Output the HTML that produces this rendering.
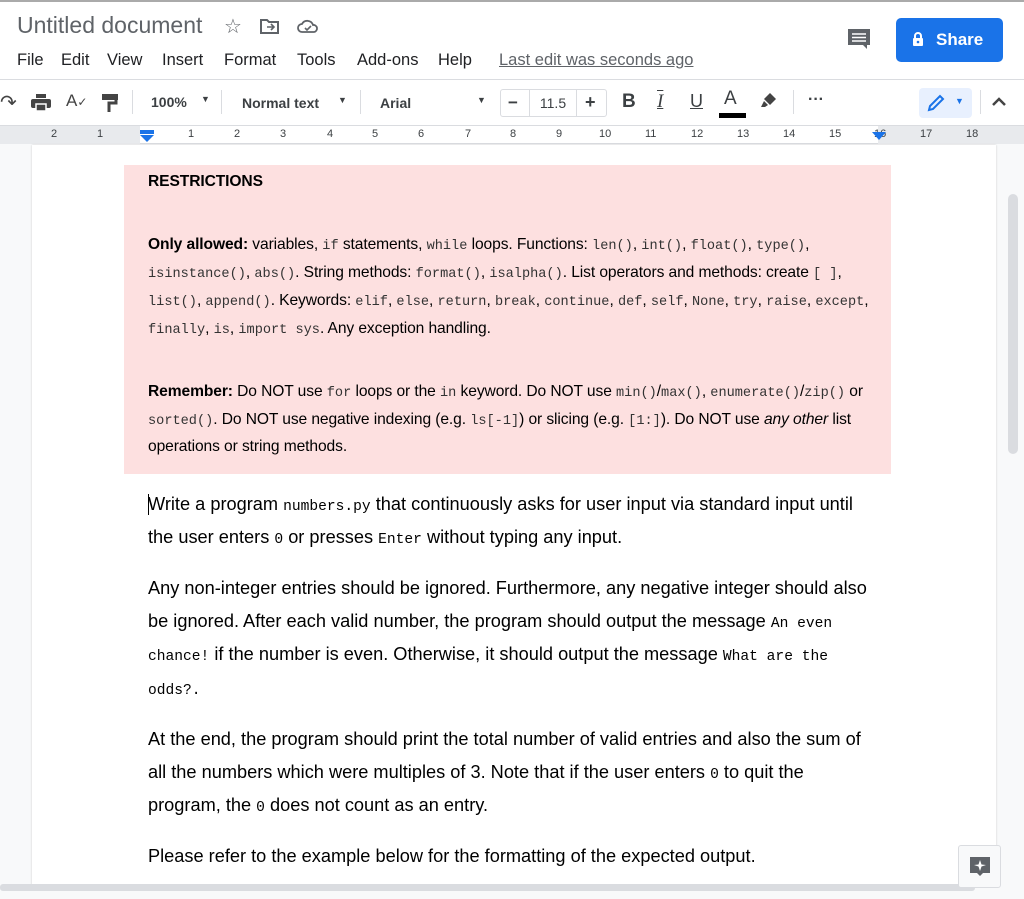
<!DOCTYPE html>
<html><head><meta charset="utf-8">
<style>
*{margin:0;padding:0;box-sizing:border-box}
body{width:1024px;height:899px;overflow:hidden;background:#f8f9fa;font-family:"Liberation Sans",Arial,sans-serif;position:relative;color:#000}
.abs{position:absolute}
.top{left:0;top:0;width:1024px;height:80px;background:#fff;border-top:2px solid #aaa;border-bottom:1px solid #dadce0}
.title{left:17px;top:12px;font-size:23px;color:#5f6368}
.menu{top:50px;font-size:16.5px;color:#202124}
.tb{left:0;top:80px;width:1024px;height:46px;background:#fff;border-bottom:1px solid #dadce0;font-size:14px;color:#3c4043}
.ruler{left:0;top:126px;width:1024px;height:18px;background:#fff;border-bottom:1px solid #dadce0;font-size:11px;color:#3c4043}
.page{left:32px;top:145px;width:964px;height:740px;background:#fff;box-shadow:0 0 2px #ccc}
.pink{left:124px;top:165px;width:767px;height:309px;background:#fde0e0}
.pt{left:148px;font-size:15.6px;white-space:nowrap;line-height:28px;letter-spacing:-0.1px}
.m{font-family:"Liberation Mono",monospace;font-size:13.6px;color:#333;letter-spacing:0}
.bt{left:148px;font-size:18.2px;white-space:nowrap;line-height:33px}
.bm{font-family:"Liberation Mono",monospace;font-size:14.6px}
.sep{top:10px;width:1px;height:24px;background:#dadce0}
</style></head><body>
<div class="abs top"></div>
<div class="abs title">Untitled document</div>
<div class="abs" style="left:224px;top:14px;font-size:20px;color:#5f6368">☆</div>
<svg class="abs" style="left:260px;top:18px" width="20" height="16" viewBox="0 0 20 16"><path d="M1 2h6l2 2h9v11H1z" fill="none" stroke="#5f6368" stroke-width="2"/><path d="M7 9h6M11 6l3 3-3 3" fill="none" stroke="#5f6368" stroke-width="1.6"/></svg>
<svg class="abs" style="left:297px;top:19px" width="22" height="15" viewBox="0 0 22 15"><path d="M5 13a4 4 0 010-8 6 6 0 0111 1 3.5 3.5 0 011 7z" fill="none" stroke="#5f6368" stroke-width="1.8"/><path d="M8 9l2 2 4-4" fill="none" stroke="#5f6368" stroke-width="1.6"/></svg>
<div class="abs menu" style="left:17px;top:51px">File</div>
<div class="abs menu" style="left:61px;top:51px">Edit</div>
<div class="abs menu" style="left:107px;top:51px">View</div>
<div class="abs menu" style="left:162px;top:51px">Insert</div>
<div class="abs menu" style="left:224px;top:51px">Format</div>
<div class="abs menu" style="left:297px;top:51px">Tools</div>
<div class="abs menu" style="left:357px;top:51px">Add-ons</div>
<div class="abs menu" style="left:438px;top:51px">Help</div>
<div class="abs menu" style="left:499px;top:51px;color:#5f6368;text-decoration:underline">Last edit was seconds ago</div>
<svg class="abs" style="left:846px;top:27px" width="26" height="24" viewBox="0 0 26 24"><path d="M2 2h22v16h-3v4l-4-4H2z" fill="#5f6368"/><path d="M6 7h14M6 10.5h14M6 14h14" stroke="#fff" stroke-width="1.6"/></svg>
<div class="abs" style="left:896px;top:18px;width:107px;height:44px;background:#1a73e8;border-radius:5px;color:#fff;font-weight:bold;font-size:17px;line-height:44px;padding-left:40px">Share</div>
<svg class="abs" style="left:912px;top:32px" width="12" height="15" viewBox="0 0 12 15"><path d="M3 6V4a3 3 0 016 0v2" fill="none" stroke="#fff" stroke-width="2"/><rect x="1" y="6" width="10" height="8" rx="1" fill="#fff"/><circle cx="6" cy="10" r="1.3" fill="#1a73e8"/></svg>
<div class="abs tb">
<div class="abs" style="left:0;top:10px;font-size:20px;color:#444">↷</div>
<svg class="abs" style="left:31px;top:14px" width="20" height="18" viewBox="0 0 20 18"><rect x="5" y="0" width="10" height="4" fill="#444"/><rect x="0" y="5" width="20" height="9" rx="2" fill="#444"/><rect x="5" y="10" width="10" height="7" fill="#444" stroke="#fff" stroke-width="1.5"/></svg>
<div class="abs" style="left:66px;top:11px;font-size:17px;color:#444">A<span style="font-size:12px">✓</span></div>
<svg class="abs" style="left:101px;top:13px" width="18" height="20" viewBox="0 0 18 20"><rect x="1" y="1" width="16" height="6" fill="#444"/><path d="M15 7v3H8v9" fill="none" stroke="#444" stroke-width="3"/></svg>
<div class="abs sep" style="left:132px"></div>
<div class="abs" style="left:151px;top:14px;font-weight:bold">100%</div><div class="abs" style="left:201px;top:14px;font-size:9px">▼</div>
<div class="abs sep" style="left:221px"></div>
<div class="abs" style="left:242px;top:15px;font-weight:bold">Normal text</div><div class="abs" style="left:338px;top:15px;font-size:9px">▼</div>
<div class="abs sep" style="left:360px"></div>
<div class="abs" style="left:380px;top:15px;font-weight:bold">Arial</div><div class="abs" style="left:477px;top:15px;font-size:9px">▼</div>
<div class="abs" style="left:500px;top:9px;width:107px;height:28px;border:1px solid #dadce0;border-radius:3px"></div>
<div class="abs" style="left:529px;top:9px;width:48px;height:28px;border-left:1px solid #dadce0;border-right:1px solid #dadce0;text-align:center;line-height:28px">11.5</div>
<div class="abs" style="left:508px;top:13px;font-size:17px;font-weight:bold">−</div>
<div class="abs" style="left:585px;top:12px;font-size:18px;font-weight:bold">+</div>
<div class="abs" style="left:622px;top:11px;font-size:19px;font-weight:bold">B</div>
<div class="abs" style="left:657px;top:11px;font-size:19px;font-style:italic;font-family:'Liberation Serif',serif;text-decoration:overline underline">I</div>
<div class="abs" style="left:690px;top:11px;font-size:18px;text-decoration:underline">U</div>
<div class="abs" style="left:724px;top:8px;font-size:19px">A</div><div class="abs" style="left:719px;top:33px;width:27px;height:5px;background:#000"></div>
<svg class="abs" style="left:760px;top:11px" width="18" height="18" viewBox="0 0 18 18"><path d="M10 2l6 6-6 6-6-6z" fill="#444"/><path d="M4 10l4 4-3 2H1z" fill="#444"/></svg>
<div class="abs sep" style="left:793px"></div>
<div class="abs" style="left:808px;top:11px;font-size:16px;font-weight:bold">···</div>
<div class="abs" style="left:919px;top:8px;width:53px;height:30px;background:#e8f0fe;border-radius:4px"></div>
<svg class="abs" style="left:927px;top:14px" width="18" height="18" viewBox="0 0 18 18"><path d="M2 16l1-4L13 2l3 3L6 15z" fill="none" stroke="#1a73e8" stroke-width="2"/></svg>
<div class="abs" style="left:955px;top:16px;font-size:9px;color:#1a73e8">▼</div>
<div class="abs sep" style="left:980px"></div>
<svg class="abs" style="left:991px;top:16px" width="16" height="12" viewBox="0 0 16 12"><path d="M2 9l6-6 6 6" fill="none" stroke="#444" stroke-width="2.5"/></svg>
</div>
<div class="abs ruler">
<div class="abs" style="left:0;top:0;width:140px;height:18px;background:#e8eaed"></div>
<div class="abs" style="left:878px;top:0;width:146px;height:18px;background:#e8eaed"></div>
<div class="abs" style="top:2px;left:0;width:1024px;white-space:nowrap;letter-spacing:0">
<span class="abs" style="left:51px">2</span><span class="abs" style="left:97px">1</span><span class="abs" style="left:188px">1</span><span class="abs" style="left:234px">2</span><span class="abs" style="left:280px">3</span><span class="abs" style="left:327px">4</span><span class="abs" style="left:372px">5</span><span class="abs" style="left:418px">6</span><span class="abs" style="left:465px">7</span><span class="abs" style="left:510px">8</span><span class="abs" style="left:556px">9</span><span class="abs" style="left:599px">10</span><span class="abs" style="left:645px">11</span><span class="abs" style="left:691px">12</span><span class="abs" style="left:737px">13</span><span class="abs" style="left:783px">14</span><span class="abs" style="left:829px">15</span><span class="abs" style="left:874px">16</span><span class="abs" style="left:920px">17</span><span class="abs" style="left:966px">18</span>
</div>
<svg class="abs" style="left:139px;top:4px" width="16" height="12" viewBox="0 0 16 12"><rect x="1" y="0" width="14" height="4" fill="#1a73e8"/><path d="M1 5h14l-7 7z" fill="#1a73e8"/></svg>
<svg class="abs" style="left:871px;top:6px" width="16" height="10" viewBox="0 0 16 10"><path d="M1 0h14l-7 8z" fill="#1a73e8"/></svg>
</div>
<div class="abs page"></div>
<div class="abs pink"></div>
<div class="abs pt" style="top:168px;font-weight:bold">RESTRICTIONS</div>
<div class="abs pt" style="top:231px"><b>Only allowed:</b> variables, <span class="m">if</span> statements, <span class="m">while</span> loops. Functions: <span class="m">len()</span>, <span class="m">int()</span>, <span class="m">float()</span>, <span class="m">type()</span>,</div>
<div class="abs pt" style="top:259px"><span class="m">isinstance()</span>, <span class="m">abs()</span>. String methods: <span class="m">format()</span>, <span class="m">isalpha()</span>. List operators and methods: create <span class="m">[ ]</span>,</div>
<div class="abs pt" style="top:287px"><span class="m">list()</span>, <span class="m">append()</span>. Keywords: <span class="m">elif</span>, <span class="m">else</span>, <span class="m">return</span>, <span class="m">break</span>, <span class="m">continue</span>, <span class="m">def</span>, <span class="m">self</span>, <span class="m">None</span>, <span class="m">try</span>, <span class="m">raise</span>, <span class="m">except</span>,</div>
<div class="abs pt" style="top:315px"><span class="m">finally</span>, <span class="m">is</span>, <span class="m">import sys</span>. Any exception handling.</div>
<div class="abs pt" style="top:378px"><b>Remember:</b> Do NOT use <span class="m">for</span> loops or the <span class="m">in</span> keyword. Do NOT use <span class="m">min()</span>/<span class="m">max()</span>, <span class="m">enumerate()</span>/<span class="m">zip()</span> or</div>
<div class="abs pt" style="top:406px"><span class="m">sorted()</span>. Do NOT use negative indexing (e.g. <span class="m">ls[-1]</span>) or slicing (e.g. <span class="m">[1:]</span>). Do NOT use <i>any other</i> list</div>
<div class="abs pt" style="top:433px">operations or string methods.</div>
<div class="abs bt" style="top:488px">Write a program <span class="bm">numbers.py</span> that continuously asks for user input via standard input until</div>
<div class="abs bt" style="top:521px">the user enters <span class="bm">0</span> or presses <span class="bm">Enter</span> without typing any input.</div>
<div class="abs bt" style="top:572px">Any non-integer entries should be ignored. Furthermore, any negative integer should also</div>
<div class="abs bt" style="top:605px">be ignored. After each valid number, the program should output the message <span class="bm">An even</span></div>
<div class="abs bt" style="top:638px"><span class="bm">chance!</span> if the number is even. Otherwise, it should output the message <span class="bm">What are the</span></div>
<div class="abs bt" style="top:672px"><span class="bm">odds?.</span></div>
<div class="abs bt" style="top:723px">At the end, the program should print the total number of valid entries and also the sum of</div>
<div class="abs bt" style="top:756px">all the numbers which were multiples of 3. Note that if the user enters <span class="bm">0</span> to quit the</div>
<div class="abs bt" style="top:789px">program, the <span class="bm">0</span> does not count as an entry.</div>
<div class="abs bt" style="top:840px">Please refer to the example below for the formatting of the expected output.</div>
<div class="abs" style="left:148px;top:494px;width:1px;height:21px;background:#000"></div>
<div class="abs" style="left:1008px;top:194px;width:10px;height:260px;background:#dadce0;border-radius:5px"></div>
<div class="abs" style="left:0;top:884px;width:975px;height:7px;background:#dadce0;border-radius:3px"></div>
<div class="abs" style="left:958px;top:845px;width:43px;height:43px;background:#f8f9fa;border:1px solid #dadce0;border-radius:3px"></div>
<svg class="abs" style="left:969px;top:856px" width="22" height="22" viewBox="0 0 22 22"><path d="M1 1h20v16h-7l-3 3-3-3H1z" fill="#5f6368"/><path d="M11 4l1.5 4.5L17 9l-4.5 1.5L11 15l-1.5-4.5L5 9l4.5-.5z" fill="#fff"/></svg>
</body></html>
